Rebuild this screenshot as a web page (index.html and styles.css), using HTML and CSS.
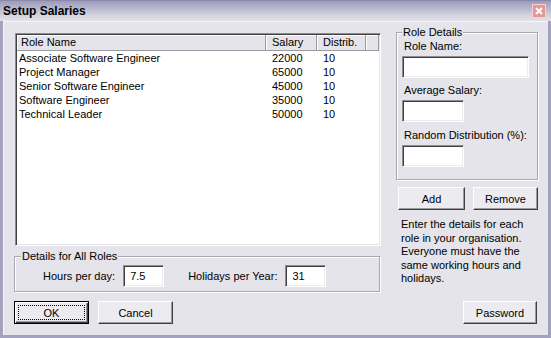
FILE: index.html
```html
<!DOCTYPE html>
<html>
<head>
<meta charset="utf-8">
<link rel="stylesheet" href="styles.css">
</head>
<body>
<div class="window">
  <div class="titlebar">
    <span class="title">Setup Salaries</span>
    <span class="close"><svg width="14" height="14" viewBox="0 0 14 14"><rect x="0.5" y="0.5" width="13" height="13" fill="#e69696" stroke="#f3d2d2"/><path d="M4 4l6 6M10 4l-6 6" stroke="#fff" stroke-width="2"/></svg></span>
  </div>
  <div class="client">
    <div class="main">
      <div class="left">
        <div class="list">
          <div class="list-head">
            <div class="hcell name">Role Name</div>
            <div class="hcell num">Salary</div>
            <div class="hcell num">Distrib.</div>
            <div class="hcell"></div>
          </div>
          <div class="list-row"><span class="name">Associate Software Engineer</span><span class="num">22000</span><span class="num">10</span></div>
          <div class="list-row"><span class="name">Project Manager</span><span class="num">65000</span><span class="num">10</span></div>
          <div class="list-row"><span class="name">Senior Software Engineer</span><span class="num">45000</span><span class="num">10</span></div>
          <div class="list-row"><span class="name">Software Engineer</span><span class="num">35000</span><span class="num">10</span></div>
          <div class="list-row"><span class="name">Technical Leader</span><span class="num">50000</span><span class="num">10</span></div>
        </div>
        <fieldset class="group all-roles">
          <legend>Details for All Roles</legend>
          <div class="inline-fields">
            <span class="ilabel first">Hours per day:</span>
            <div class="textbox short">7.5</div>
            <span class="ilabel second">Holidays per Year:</span>
            <div class="textbox short">31</div>
          </div>
        </fieldset>
      </div>
      <div class="right">
        <fieldset class="group role-details">
          <legend>Role Details</legend>
          <div class="flabel l1">Role Name:</div>
          <div class="textbox wide"></div>
          <div class="flabel l2">Average Salary:</div>
          <div class="textbox small"></div>
          <div class="flabel l3">Random Distribution (%):</div>
          <div class="textbox small"></div>
        </fieldset>
        <div class="btn-row">
          <button class="btn add">Add</button>
          <button class="btn remove">Remove</button>
        </div>
        <p class="help">Enter the details for each<br>role in your organisation.<br>Everyone must have the<br>same working hours and<br>holidays.</p>
      </div>
    </div>
    <div class="footer">
      <div class="footer-left">
        <button class="btn ok"><span class="focus">OK</span></button>
        <button class="btn cancel">Cancel</button>
      </div>
      <button class="btn password">Password</button>
    </div>
  </div>
</div>
</body>
</html>
```

FILE: styles.css
```css
* { box-sizing: border-box; }
html, body { margin: 0; padding: 0; }
body {
  width: 551px;
  height: 338px;
  overflow: hidden;
  font-family: "Liberation Sans", Arial, sans-serif;
  font-size: 11px;
  color: #000;
  background: #e4e4ea;
}
.window {
  width: 551px;
  height: 338px;
  display: flex;
  flex-direction: column;
}
.titlebar {
  height: 21px;
  flex: none;
  display: flex;
  align-items: center;
  justify-content: space-between;
  padding: 0 5px 0 3px;
  background: linear-gradient(#9c9cba 0%, #b6b6cc 35%, #d6d6e2 75%, #e2e2ea 100%);
  border-top: 1px solid #8a8aa8;
}
.title {
  font-weight: bold;
  font-size: 12px;
  line-height: 14px;
}
.close { display: flex; }
.client {
  flex: 1;
  background: #e4e4ea;
  border: 3px solid #a2a2be;
  border-top: 0;
  box-shadow: inset 1px 1px 0 #f6f6f8;
  padding: 5px 9px 0 11px;
}
.main {
  display: grid;
  grid-template-columns: 367px 144px;
  column-gap: 14px;
  align-items: start;
}
.left { display: flex; flex-direction: column; }
.list {
  margin: 7px 0 0 1px;
  width: 366px;
  height: 213px;
  background: #fff;
  border: 1px solid;
  border-color: #8e8e92 #fff #fff #8e8e92;
  box-shadow: inset 1px 1px 0 #404040, inset -1px -1px 0 #e4e4ea;
  padding: 1px;
  overflow: hidden;
}
.list-head, .list-row {
  display: grid;
  grid-template-columns: 249px 51px 49px 13px;
}
.list-head {
  height: 16px;
  background: #e4e4ea;
}
.hcell {
  line-height: 15px;
  height: 16px;
  border-right: 1px solid #9a9aa0;
  border-bottom: 1px solid #9a9aa0;
  box-shadow: inset 1px 1px 0 #fff;
  padding-left: 6px;
  white-space: nowrap;
}
.hcell.name { padding-left: 4px; }
.list-row { line-height: 14px; white-space: nowrap; }
.list-row .name { padding-left: 2px; }
.list-row .num { padding-left: 6px; }

.group {
  margin: 0;
  border: 1px solid #a8a8ae;
  box-shadow: inset 1px 1px 0 #fff, 1px 1px 0 #fff;
  min-width: 0;
}
.group legend {
  padding: 0 1px;
  line-height: 13px;
  background: #e4e4ea;
}
.all-roles {
  margin: 4px 1px 0 0;
  padding: 2px 6px 4px 6px;
}
.inline-fields {
  display: flex;
  align-items: center;
}
.ilabel.first { margin-left: 22px; margin-right: 8px; }
.ilabel.second { margin-left: 24px; margin-right: 8px; }

.textbox {
  height: 22px;
  background: #fff;
  border: 1px solid;
  border-color: #8e8e92 #fff #fff #8e8e92;
  box-shadow: inset 1px 1px 0 #404040, inset -1px -1px 0 #ececf0;
  line-height: 20px;
  padding-left: 6px;
}
.textbox.short { width: 41px; }
.textbox.wide { width: 127px; margin-top: 3px; }
.textbox.small { width: 62px; margin-top: 3px; }

.role-details {
  margin: 0 1px;
  padding: 0 6px 12px 5px;
}
.flabel { line-height: 13px; padding-left: 2px; white-space: nowrap; }
.flabel.l1 { margin-top: 1px; }
.flabel.l2 { margin-top: 6px; }
.flabel.l3 { margin-top: 7px; }

.btn {
  font-family: "Liberation Sans", Arial, sans-serif;
  font-size: 11px;
  color: #000;
  height: 23px;
  background: #ececf0;
  border: 1px solid;
  border-color: #fff #404040 #404040 #fff;
  box-shadow: inset -1px -1px 0 #9a9aa0;
  padding: 0;
  margin: 0;
}
.btn-row {
  display: flex;
  justify-content: space-between;
  margin-top: 7px;
  padding: 0 1px 0 3px;
}
.btn.add { width: 67px; }
.btn.remove { width: 65px; }
.help {
  margin: 8px 0 0 6px;
  line-height: 13.5px;
  white-space: nowrap;
}
.footer {
  display: flex;
  justify-content: space-between;
  margin-top: 9px;
  padding-right: 2px;
}
.footer-left { display: flex; gap: 9px; }
.btn.ok, .btn.cancel { width: 75px; }
.btn.password { width: 74px; }
.btn.ok {
  border: 1px solid #000;
  box-shadow: inset 1px 1px 0 #fff, inset -1px -1px 0 #404040, inset -2px -2px 0 #9a9aa0;
  padding: 3px;
  display: flex;
}
.btn.ok .focus {
  flex: 1;
  border: 1px dotted #000;
  display: flex;
  align-items: center;
  justify-content: center;
}
```
